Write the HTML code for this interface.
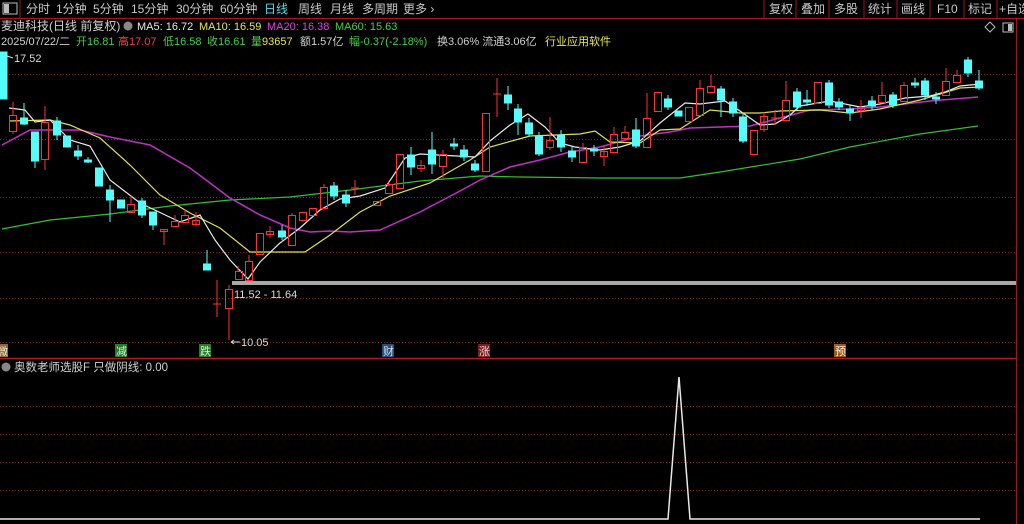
<!DOCTYPE html>
<html><head><meta charset="utf-8">
<style>
html,body{margin:0;padding:0;background:#000;width:1024px;height:524px;overflow:hidden}
svg{display:block}
text{font-family:"Liberation Sans","Noto Sans CJK SC",sans-serif}
</style></head><body>
<svg width="1024" height="524" viewBox="0 0 1024 524" xmlns="http://www.w3.org/2000/svg">
<rect width="1024" height="524" fill="#000"/>
<!-- top bar -->
<rect x="3" y="3" width="14" height="11" fill="none" stroke="#bbb" stroke-width="1"/>
<rect x="4" y="4" width="5" height="9" fill="#bbb"/>
<line x1="20" y1="0" x2="20" y2="18" stroke="#a01818"/>
<line x1="0" y1="18.5" x2="1024" y2="18.5" stroke="#a01818"/>
<g font-size="12" fill="#c8c8c8">
<text x="26" y="13">分时</text><text x="56" y="13">1分钟</text><text x="93" y="13">5分钟</text>
<text x="131" y="13">15分钟</text><text x="176" y="13">30分钟</text><text x="220" y="13">60分钟</text>
<text x="264" y="13" fill="#5ad8e8">日线</text><text x="298" y="13">周线</text><text x="330" y="13">月线</text>
<text x="362" y="13">多周期</text><text x="403" y="13">更多 ›</text>
<text x="769" y="13">复权</text><text x="801" y="13">叠加</text><text x="834" y="13">多股</text>
<text x="868" y="13">统计</text><text x="901" y="13">画线</text><text x="937" y="13">F10</text>
<text x="968" y="13">标记</text><text x="999" y="13">+自选</text>
</g>
<g stroke="#a01818">
<line x1="764" y1="0" x2="764" y2="18"/><line x1="796" y1="0" x2="796" y2="18"/><line x1="829" y1="0" x2="829" y2="18"/>
<line x1="864" y1="0" x2="864" y2="18"/><line x1="897" y1="0" x2="897" y2="18"/><line x1="930" y1="0" x2="930" y2="18"/>
<line x1="964" y1="0" x2="964" y2="18"/><line x1="997" y1="0" x2="997" y2="18"/>
<line x1="1016.5" y1="18" x2="1016.5" y2="524"/>
</g>
<!-- header lines -->
<g font-size="11">
<text x="1" y="30" fill="#d0d0d0" font-size="12">麦迪科技(日线 前复权)</text>
<circle cx="128" cy="26" r="4.5" fill="#888"/>
<text x="137" y="30" fill="#e8e8e8">MA5: 16.72</text>
<text x="199" y="30" fill="#e8e84a">MA10: 16.59</text>
<text x="267" y="30" fill="#e040e0">MA20: 16.38</text>
<text x="335" y="30" fill="#40d040">MA60: 15.63</text>
<text x="1" y="45" fill="#d0d0d0">2025/07/22/二</text>
<text x="76" y="45" fill="#40d040">开16.81</text>
<text x="118" y="45" fill="#ff3c3c">高17.07</text>
<text x="163" y="45" fill="#40d040">低16.58</text>
<text x="207" y="45" fill="#40d040">收16.61</text>
<text x="251" y="45" fill="#e8e84a"><tspan fill="#40d040">量</tspan>93657</text>
<text x="300" y="45" fill="#d0d0d0">额1.57亿</text>
<text x="349" y="45" fill="#40d040">幅-0.37(-2.18%)</text>
<text x="437" y="45" fill="#d0d0d0">换3.06% 流通3.06亿</text>
<text x="545" y="45" fill="#e8e84a">行业应用软件</text>
</g>
<path d="M990 22 L995 27 L990 32 L985 27Z" fill="none" stroke="#bbb"/>
<rect x="1003" y="23" width="10" height="9" fill="none" stroke="#bbb"/><rect x="1008" y="24" width="4" height="7" fill="#bbb"/>
<!-- grid -->
<g stroke="#8a1e1e" stroke-dasharray="1,2">
<line x1="0" y1="74.5" x2="1016" y2="74.5"/><line x1="0" y1="139.5" x2="1016" y2="139.5"/>
<line x1="0" y1="197.5" x2="1016" y2="197.5"/><line x1="0" y1="252.5" x2="1016" y2="252.5"/>
<line x1="0" y1="298.5" x2="1016" y2="298.5"/><line x1="0" y1="342.5" x2="1016" y2="342.5"/>
<line x1="0" y1="406.5" x2="1016" y2="406.5"/><line x1="0" y1="434.5" x2="1016" y2="434.5"/>
<line x1="0" y1="462.5" x2="1016" y2="462.5"/><line x1="0" y1="490.5" x2="1016" y2="490.5"/>
</g>
<line x1="0" y1="358.5" x2="1016" y2="358.5" stroke="#b01c1c" stroke-width="1.5"/>
<!-- MA lines -->
<g fill="none" stroke-width="1.2">
<polyline stroke="#30c030" points="2,229 50,220 110,214 170,206 230,200 290,197 350,190 420,181 480,176 520,177 600,178 680,178 720,172 800,159 850,147 920,134 978,126"/>
<polyline stroke="#c030c8" stroke-width="1.5" points="2,145 30,130 55,130 80,130 110,137 150,145 190,168 230,198 260,215 290,228 310,232 330,231 350,232 380,230 420,212 460,191 480,180 510,167 540,160 570,152 600,147 640,136 670,132 690,128 720,127 750,126 780,118 810,110 850,109 880,107 930,101 978,97"/>
<polyline stroke="#e0e050" points="9,121 50,120 70,125 100,138 130,165 160,195 190,213 220,228 250,252 290,252 305,252 330,235 360,212 390,196 430,183 470,160 490,147 530,136 580,134 595,131 610,142 640,143 660,130 680,129 710,110 740,113 760,113 780,111 820,110 850,113 880,109 920,100 960,88 980,87"/>
<polyline stroke="#e8e8e8" points="9,108 25,110 35,122 50,120 70,140 90,146 110,180 140,203 180,222 200,215 215,240 230,260 248,279 260,262 280,243 300,228 320,210 340,199 360,196 385,188 405,158 420,154 475,157 490,141 510,125 528,114 545,127 560,143 575,147 600,150 620,147 640,141 660,123 685,103 700,104 725,101 740,111 760,125 775,124 790,115 800,106 830,101 860,107 880,104 905,98 930,96 945,92 960,86 980,84"/>
</g>
<!-- cyan candles -->
<g fill="#54fcfc" stroke="#54fcfc" stroke-width="1">
<rect x="0" y="52" width="7" height="47"/>
<line x1="24" y1="103" x2="24" y2="125"/><rect x="20.5" y="118" width="7" height="6"/>
<line x1="35" y1="132" x2="35" y2="168"/><rect x="31.5" y="132" width="7" height="29"/>
<line x1="57" y1="117" x2="57" y2="140"/><rect x="53.5" y="121" width="7" height="14"/>
<rect x="63.5" y="136" width="7" height="11"/>
<line x1="78" y1="145" x2="78" y2="160"/><rect x="74.5" y="151" width="7" height="5"/>
<line x1="88" y1="157" x2="88" y2="163"/><rect x="84.5" y="160" width="7" height="2"/>
<rect x="95.5" y="168" width="7" height="18"/>
<line x1="110" y1="185" x2="110" y2="222"/><rect x="106.5" y="190" width="7" height="10"/>
<rect x="117.5" y="200" width="7" height="8"/>
<line x1="142" y1="198" x2="142" y2="218"/><rect x="138.5" y="201" width="7" height="14"/>
<line x1="153" y1="212" x2="153" y2="230"/><rect x="149.5" y="212" width="7" height="13"/>
<line x1="207" y1="250" x2="207" y2="270"/><rect x="203.5" y="264" width="7" height="6"/>
<line x1="282" y1="225" x2="282" y2="240"/><rect x="278.5" y="231" width="7" height="6"/>
<line x1="334" y1="182" x2="334" y2="200"/><rect x="330.5" y="186" width="7" height="10"/>
<line x1="346" y1="190" x2="346" y2="207"/><rect x="342.5" y="195" width="7" height="8"/>
<line x1="411" y1="147" x2="411" y2="175"/><rect x="407.5" y="155" width="7" height="12"/>
<line x1="432" y1="132" x2="432" y2="174"/><rect x="428.5" y="150" width="7" height="14"/>
<line x1="454" y1="138" x2="454" y2="150"/><rect x="450.5" y="144" width="7" height="2"/>
<line x1="464" y1="145" x2="464" y2="161"/><rect x="460.5" y="150" width="7" height="7"/>
<line x1="475" y1="160" x2="475" y2="172"/><rect x="471.5" y="164" width="7" height="6"/>
<line x1="508" y1="86" x2="508" y2="110"/><rect x="504.5" y="95" width="7" height="8"/>
<line x1="518" y1="104" x2="518" y2="135"/><rect x="514.5" y="109" width="7" height="13"/>
<line x1="529" y1="118" x2="529" y2="136"/><rect x="525.5" y="123" width="7" height="11"/>
<line x1="539" y1="132" x2="539" y2="156"/><rect x="535.5" y="136" width="7" height="18"/>
<line x1="561" y1="130" x2="561" y2="152"/><rect x="557.5" y="135" width="7" height="12"/>
<line x1="572" y1="146" x2="572" y2="162"/><rect x="568.5" y="151" width="7" height="6"/>
<line x1="594" y1="145" x2="594" y2="156"/><rect x="590.5" y="149" width="7" height="2"/>
<line x1="636" y1="118" x2="636" y2="148"/><rect x="632.5" y="130" width="7" height="16"/>
<line x1="668" y1="95" x2="668" y2="110"/><rect x="664.5" y="99" width="7" height="8"/>
<rect x="675" y="111" width="7" height="5"/>
<line x1="721" y1="86" x2="721" y2="117"/><rect x="717.5" y="89" width="7" height="11"/>
<line x1="733" y1="98" x2="733" y2="117"/><rect x="729.5" y="102" width="7" height="11"/>
<line x1="743" y1="113" x2="743" y2="143"/><rect x="739.5" y="117" width="7" height="24"/>
<line x1="797" y1="88" x2="797" y2="110"/><rect x="793.5" y="92" width="7" height="15"/>
<line x1="807" y1="90" x2="807" y2="106"/><rect x="803.5" y="100" width="7" height="2"/>
<line x1="829" y1="80" x2="829" y2="108"/><rect x="825.5" y="83" width="7" height="22"/>
<line x1="839" y1="98" x2="839" y2="110"/><rect x="835.5" y="102" width="7" height="5"/>
<line x1="850" y1="105" x2="850" y2="121"/><rect x="846.5" y="109" width="7" height="4"/>
<line x1="872" y1="96" x2="872" y2="110"/><rect x="868.5" y="101" width="7" height="5"/>
<line x1="893" y1="92" x2="893" y2="108"/><rect x="889.5" y="95" width="7" height="10"/>
<line x1="915" y1="78" x2="915" y2="88"/><rect x="911.5" y="83" width="7" height="2"/>
<line x1="925" y1="78" x2="925" y2="100"/><rect x="921.5" y="81" width="7" height="14"/>
<line x1="936" y1="92" x2="936" y2="104"/><rect x="932.5" y="97" width="7" height="2"/>
<line x1="968" y1="57" x2="968" y2="77"/><rect x="964.5" y="60" width="7" height="13"/>
<line x1="979" y1="70" x2="979" y2="90"/><rect x="975.5" y="81" width="7" height="7"/>
</g>
<!-- red candles -->
<g fill="none" stroke="#ff3030" stroke-width="1">
<line x1="13" y1="102" x2="13" y2="115"/><line x1="13" y1="131" x2="13" y2="134"/><rect x="9.5" y="115.5" width="7" height="16"/>
<line x1="45" y1="106" x2="45" y2="122"/><line x1="45" y1="159" x2="45" y2="170"/><rect x="41.5" y="122.5" width="7" height="37"/>
<line x1="131" y1="196" x2="131" y2="204"/><rect x="127.5" y="204.5" width="7" height="8"/>
<line x1="164" y1="230" x2="164" y2="245"/><rect x="160.5" y="229.5" width="7" height="2"/>
<line x1="175" y1="215" x2="175" y2="221"/><rect x="171.5" y="221.5" width="7" height="5"/>
<line x1="185" y1="209" x2="185" y2="215"/><rect x="181.5" y="215.5" width="7" height="7"/>
<line x1="196" y1="212" x2="196" y2="226"/><rect x="192.5" y="220.5" width="7" height="4"/>
<line x1="217" y1="280" x2="217" y2="317"/><line x1="213" y1="304" x2="221" y2="304"/>
<line x1="229" y1="285" x2="229" y2="289"/><line x1="229" y1="308" x2="229" y2="340"/><rect x="225.5" y="289.5" width="7" height="19"/>
<line x1="238" y1="266" x2="238" y2="272"/><rect x="235.5" y="271.5" width="7" height="8"/>
<line x1="249" y1="255" x2="249" y2="261"/><rect x="245.5" y="261.5" width="7" height="19"/>
<rect x="256.5" y="233.5" width="7" height="21"/>
<line x1="270" y1="226" x2="270" y2="238"/><rect x="266.5" y="231.5" width="7" height="3"/>
<line x1="292" y1="213" x2="292" y2="216"/><rect x="288.5" y="215.5" width="7" height="30"/>
<rect x="299.5" y="212.5" width="7" height="8"/>
<rect x="309.5" y="208.5" width="7" height="7"/>
<line x1="324" y1="184" x2="324" y2="188"/><rect x="320.5" y="187.5" width="7" height="21"/>
<line x1="355" y1="180" x2="355" y2="195"/><line x1="351" y1="188" x2="359" y2="188"/>
<rect x="373.5" y="201.5" width="7" height="4"/>
<line x1="389" y1="182" x2="389" y2="185"/><rect x="385.5" y="184.5" width="7" height="9"/>
<rect x="396.5" y="154.5" width="7" height="34"/>
<line x1="421" y1="160" x2="421" y2="172"/><rect x="417.5" y="165.5" width="7" height="3"/>
<line x1="443" y1="150" x2="443" y2="154"/><line x1="443" y1="166" x2="443" y2="178"/><rect x="439.5" y="154.5" width="7" height="12"/>
<rect x="482.5" y="113.5" width="7" height="58"/>
<line x1="497" y1="78" x2="497" y2="117"/><line x1="493" y1="94" x2="501" y2="94"/>
<line x1="550" y1="117" x2="550" y2="140"/><line x1="550" y1="147" x2="550" y2="150"/><rect x="546.5" y="140.5" width="7" height="7"/>
<line x1="583" y1="143" x2="583" y2="147"/><rect x="579.5" y="147.5" width="7" height="15"/>
<line x1="604" y1="145" x2="604" y2="166"/><rect x="600.5" y="151.5" width="7" height="5"/>
<line x1="614" y1="127" x2="614" y2="134"/><rect x="610.5" y="134.5" width="7" height="18"/>
<line x1="625" y1="126" x2="625" y2="132"/><rect x="621.5" y="132.5" width="7" height="6"/>
<line x1="647" y1="93" x2="647" y2="118"/><rect x="643.5" y="118.5" width="7" height="29"/>
<rect x="654.5" y="92.5" width="7" height="19"/>
<rect x="685.5" y="107.5" width="7" height="14"/>
<line x1="700" y1="80" x2="700" y2="88"/><rect x="696.5" y="88.5" width="7" height="27"/>
<line x1="711" y1="75" x2="711" y2="86"/><rect x="707.5" y="86.5" width="7" height="6"/>
<rect x="750.5" y="130.5" width="7" height="24"/>
<line x1="764" y1="112" x2="764" y2="132"/><rect x="760.5" y="116.5" width="7" height="13"/>
<line x1="775" y1="110" x2="775" y2="125"/><line x1="771" y1="118" x2="779" y2="118"/>
<line x1="786" y1="81" x2="786" y2="100"/><rect x="782.5" y="100.5" width="7" height="20"/>
<rect x="814.5" y="82.5" width="7" height="21"/>
<line x1="861" y1="100" x2="861" y2="118"/><rect x="857.5" y="107.5" width="7" height="3"/>
<line x1="882" y1="82" x2="882" y2="95"/><rect x="878.5" y="95.5" width="7" height="7"/>
<line x1="904" y1="82" x2="904" y2="85"/><rect x="900.5" y="85.5" width="7" height="16"/>
<line x1="946" y1="68" x2="946" y2="81"/><rect x="942.5" y="81.5" width="7" height="14"/>
<line x1="957" y1="70" x2="957" y2="75"/><rect x="953.5" y="75.5" width="7" height="7"/>
</g>
<!-- gray bar & labels -->
<rect x="232" y="281" width="784" height="4" fill="#a8a8a8"/>
<g font-size="11" fill="#d8d8d8">
<text x="14" y="62">17.52</text><line x1="7" y1="56" x2="13" y2="58" stroke="#d8d8d8"/>
<text x="234" y="298">11.52 - 11.64</text>
<text x="241" y="346">10.05</text><path d="M231 342 H240 M231 342 l3 -2 M231 342 l3 2" stroke="#d8d8d8" fill="none"/>
</g>
<!-- markers -->
<g font-size="11">
<rect x="0" y="344" width="8" height="13" fill="#8a6a3a"/><text x="-3" y="355" fill="#f0e0c0">微</text>
<rect x="115" y="344" width="12" height="13" fill="#2a7a2a"/><text x="116" y="355" fill="#d0f0d0">减</text>
<rect x="199" y="344" width="12" height="13" fill="#2a7a2a"/><text x="200" y="355" fill="#d0f0d0">跌</text>
<rect x="382" y="344" width="12" height="13" fill="#2a4a7a"/><text x="383" y="355" fill="#d0e0f0">财</text>
<rect x="478" y="344" width="12" height="13" fill="#7a2020"/><text x="479" y="355" fill="#f0d0d0">涨</text>
<rect x="834" y="344" width="12" height="13" fill="#9a5a20"/><text x="835" y="355" fill="#f8e8d0">预</text>
</g>
<!-- indicator -->
<circle cx="6" cy="367" r="4.5" fill="#888"/>
<text x="14" y="371" font-size="11.5" fill="#d0d0d0">奥数老师选股F  只做阴线: 0.00</text>
<polyline points="0,519 668,519 679,377 690,519 980,519" fill="none" stroke="#e8e8e8" stroke-width="1.5"/>
</svg>
</body></html>
